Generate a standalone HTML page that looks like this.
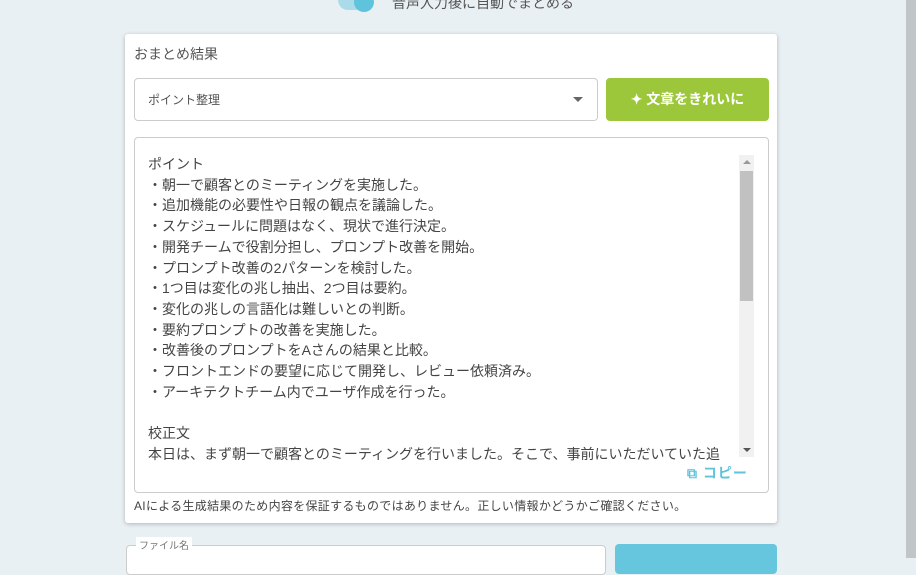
<!DOCTYPE html>
<html><head><meta charset="utf-8"><style>
*{box-sizing:border-box;margin:0;padding:0}
body{width:916px;height:558px;overflow:hidden;background:#e9f0f4;font-family:"Liberation Sans","Noto Sans CJK JP",sans-serif;color:#444;position:relative}
.abs{position:absolute}
</style></head><body>
<div class="abs" style="left:338px;top:-10px;width:30px;height:20px;border-radius:10px;background:#a9dbe9"></div>
<div class="abs" style="left:354px;top:-8px;width:20px;height:20px;border-radius:50%;background:#5fc3dc"></div>
<div class="abs" style="left:392px;top:-7px;font-size:14px;color:#555">音声入力後に自動でまとめる</div>
<div class="abs" style="left:906px;top:0;width:10px;height:558px;background:#c2c5c7"></div>

<div class="abs" style="left:125px;top:34px;width:652px;height:489px;background:#fff;border-radius:3px;box-shadow:0 1px 4px rgba(0,0,0,.25)"></div>
<div class="abs" style="left:134px;top:44px;font-size:14px;color:#555">おまとめ結果</div>
<div class="abs" style="left:134px;top:78px;width:464px;height:43px;border:1px solid #ccc;border-radius:4px"></div>
<div class="abs" style="left:148px;top:91px;font-size:12px;color:#555">ポイント整理</div>
<div class="abs" style="left:573px;top:97px;width:0;height:0;border-left:5px solid transparent;border-right:5px solid transparent;border-top:5px solid #666"></div>
<div class="abs" style="left:606px;top:78px;width:163px;height:43px;background:#9cc73a;border-radius:4px;color:#fff;font-size:14px;font-weight:bold;line-height:43px;text-align:center">✦ 文章をきれいに</div>

<div class="abs" style="left:134px;top:137px;width:635px;height:356px;border:1px solid #ccc;border-radius:4px"></div>
<div class="abs" style="left:148px;top:154px;font-size:14px;line-height:20.7px;color:#444;white-space:pre">ポイント
・朝一で顧客とのミーティングを実施した。
・追加機能の必要性や日報の観点を議論した。
・スケジュールに問題はなく、現状で進行決定。
・開発チームで役割分担し、プロンプト改善を開始。
・プロンプト改善の2パターンを検討した。
・1つ目は変化の兆し抽出、2つ目は要約。
・変化の兆しの言語化は難しいとの判断。
・要約プロンプトの改善を実施した。
・改善後のプロンプトをAさんの結果と比較。
・フロントエンドの要望に応じて開発し、レビュー依頼済み。
・アーキテクトチーム内でユーザ作成を行った。

校正文
本日は、まず朝一で顧客とのミーティングを行いました。そこで、事前にいただいていた追</div>
<div class="abs" style="left:739px;top:155px;width:15px;height:302px;background:#f1f1f1"></div>
<div class="abs" style="left:740px;top:171px;width:13px;height:130px;background:#c1c1c1"></div>
<div class="abs" style="left:743px;top:160px;border-left:4px solid transparent;border-right:4px solid transparent;border-bottom:4px solid #999"></div>
<div class="abs" style="left:743px;top:448px;border-left:4px solid transparent;border-right:4px solid transparent;border-top:4px solid #555"></div>
<div class="abs" style="left:687px;top:463px;font-size:14px;color:#5fc3dc;font-weight:bold;letter-spacing:1px">⧉ コピー</div>
<div class="abs" style="left:134px;top:497px;font-size:12px;letter-spacing:0.3px;color:#444">AIによる生成結果のため内容を保証するものではありません。正しい情報かどうかご確認ください。</div>

<div class="abs" style="left:126px;top:545px;width:480px;height:30px;background:#fff;border:1px solid #ccc;border-radius:4px"></div>
<div class="abs" style="left:136px;top:537px;font-size:10px;color:#777;background:#fff;padding:0 3px">ファイル名</div>
<div class="abs" style="left:615px;top:544px;width:162px;height:30px;background:#66c6de;border-radius:4px"></div>
</body></html>
